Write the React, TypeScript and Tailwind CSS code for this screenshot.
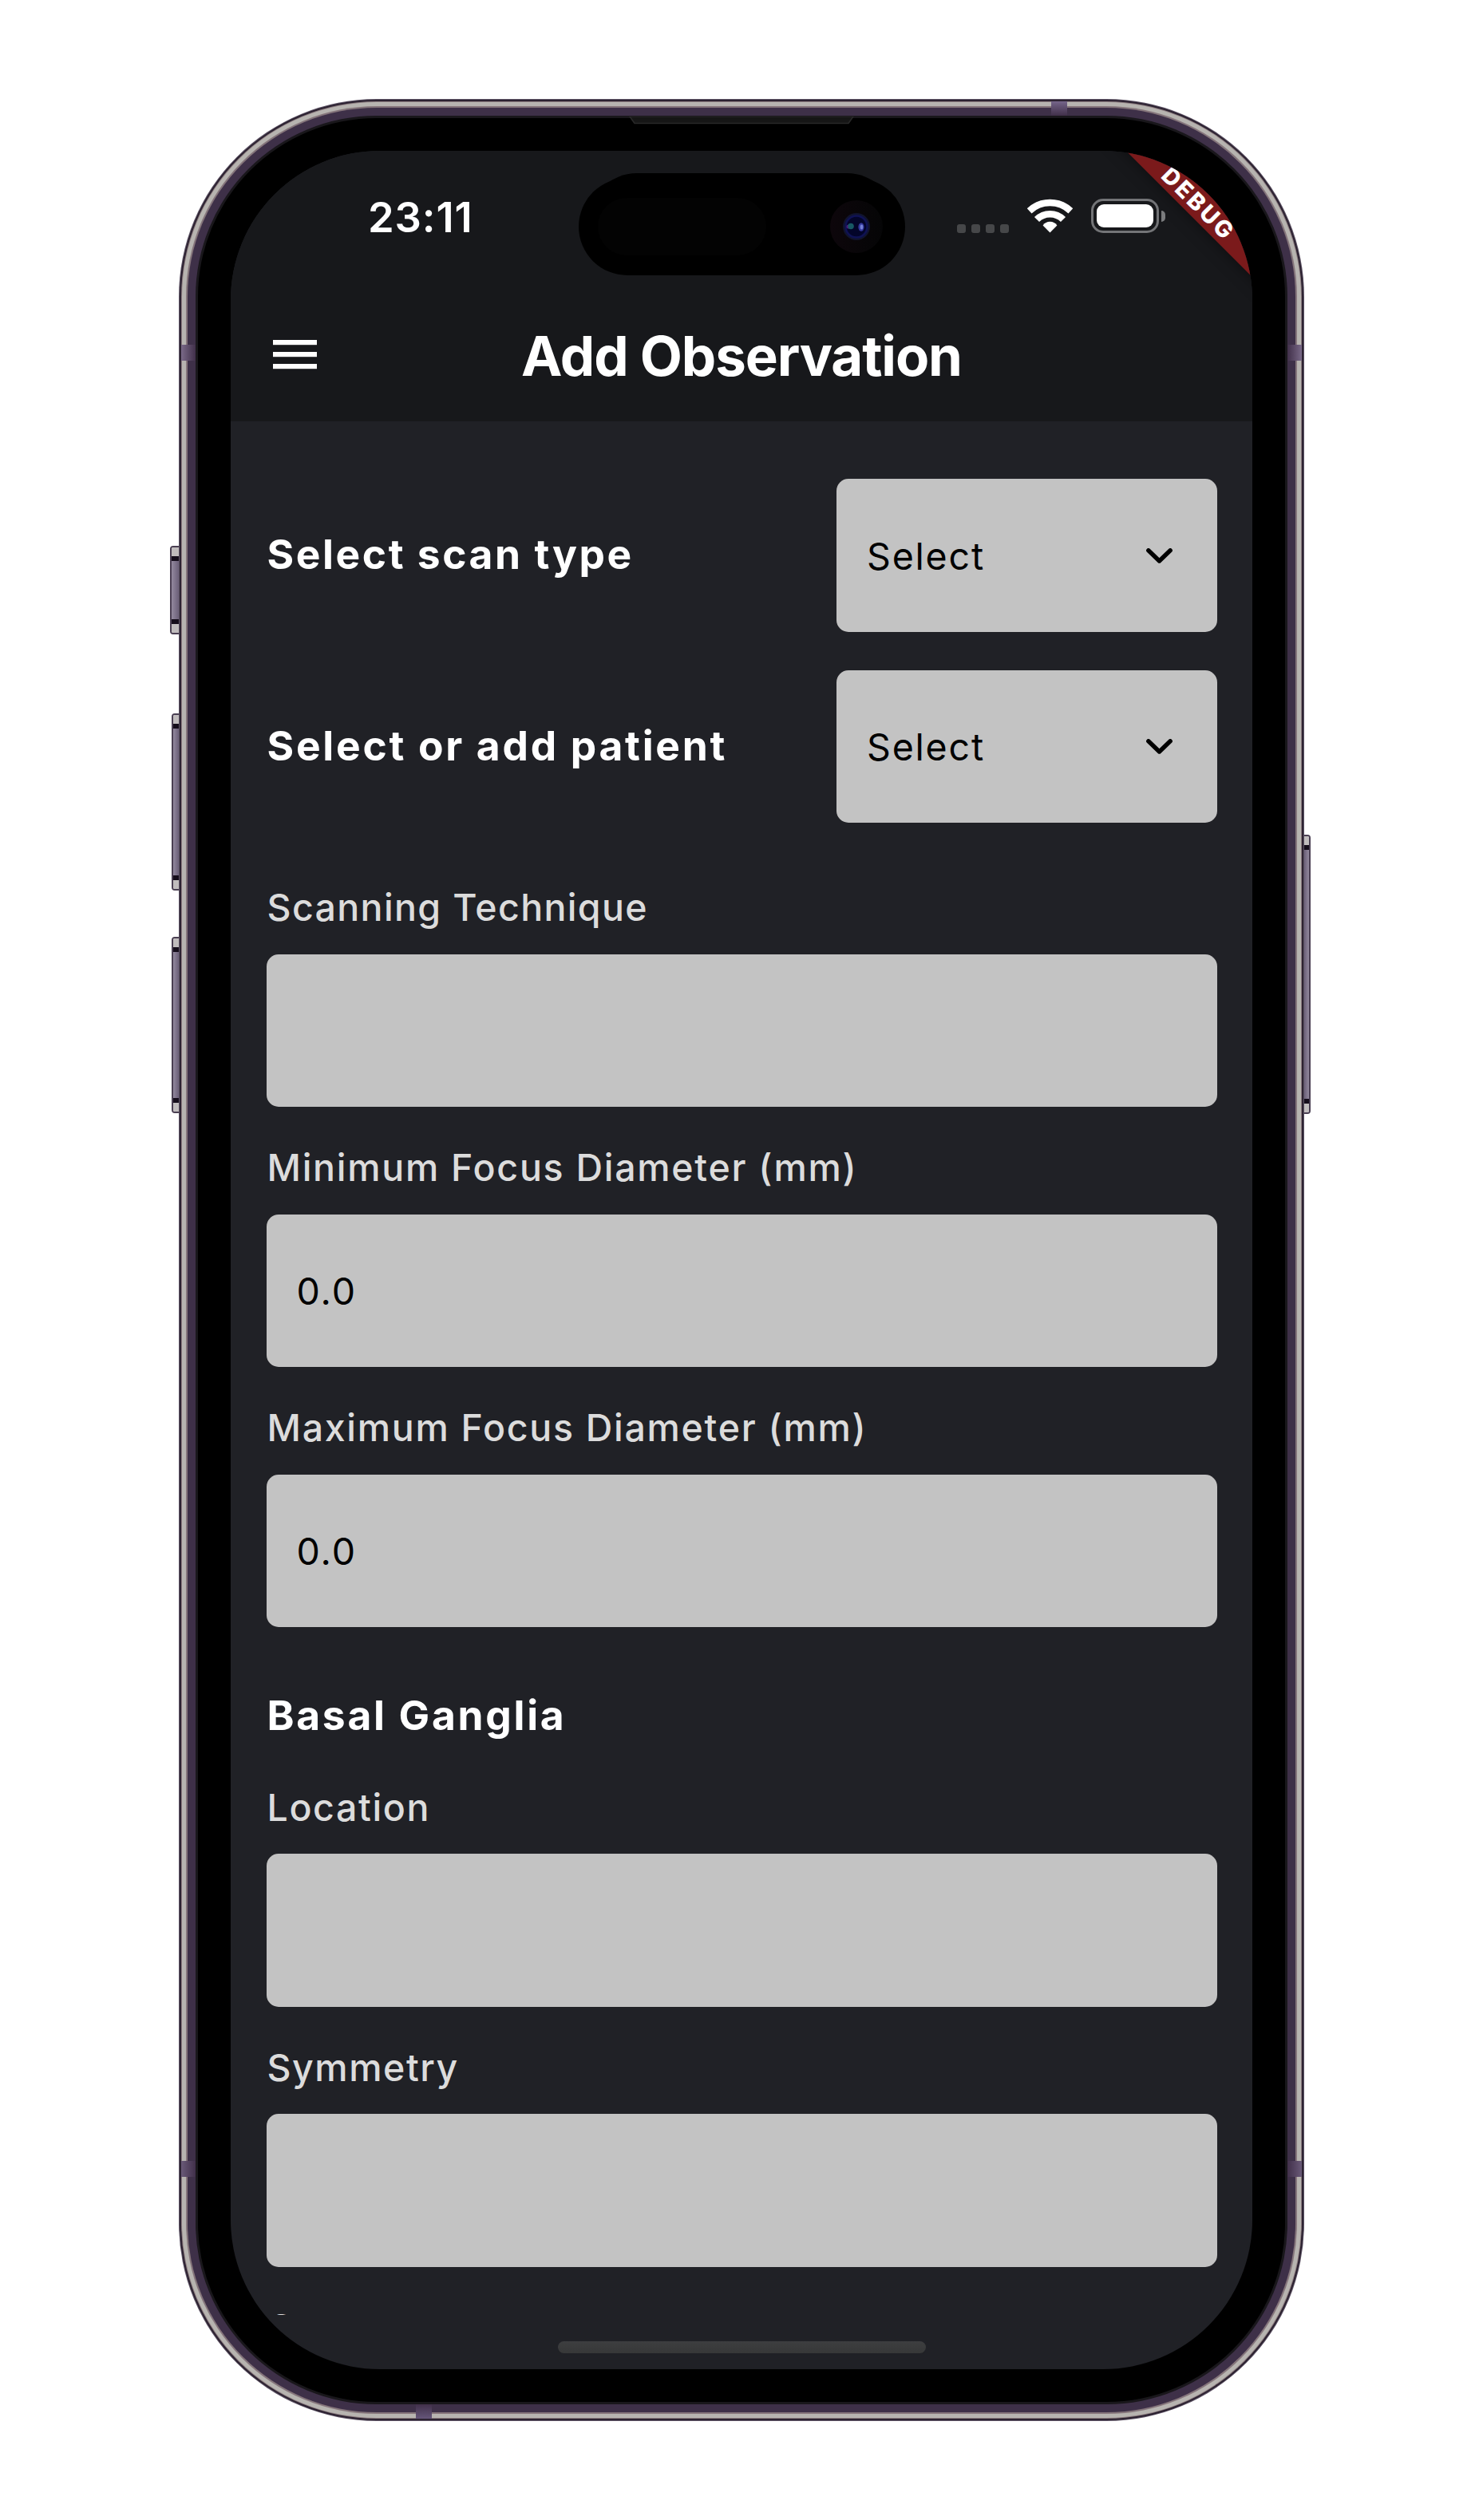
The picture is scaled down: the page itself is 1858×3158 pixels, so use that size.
import type { ReactNode } from "react";

function DeviceFrame({ children }: { children: ReactNode }) {
  return (
    <div className="relative h-[2910px] w-[1410px]">
      <SideButton className="left-[-11px] top-[560px] h-[111px] w-[13px]" />
      <SideButton className="left-[-9px] top-[770px] h-[222px] w-[11px]" />
      <SideButton className="left-[-9px] top-[1050px] h-[221px] w-[11px]" />
      <SideButton flip className="right-[-8px] top-[922px] h-[350px] w-[10px]" />

      <div className="relative h-full rounded-[248px] bg-[#5d5364] p-px">
        <div className="h-full rounded-[247px] bg-[#2c2231] p-[2px]">
          <div className="h-full rounded-[245px] bg-[#8b7b7f] p-px">
            <div className="h-full rounded-[244px] bg-[#b7b4b0] p-[5px]">
              <div className="h-full rounded-[239px] bg-[#85757b] p-[2px]">
                <div className="h-full rounded-[237px] bg-[#3e3048] p-[10px]">
                  <div className="h-full rounded-[227px] bg-[#19171b] p-[3px]">
                    <div className="h-full rounded-[224px] bg-black p-[41px]">
                      <div className="relative h-full overflow-hidden rounded-[187px] bg-[#202126]">
                        {children}
                      </div>
                    </div>
                  </div>
                </div>
              </div>
            </div>
          </div>
        </div>
      </div>

      {/* Antenna bands */}
      <div className="absolute left-[3px] top-[308px] h-[20px] w-[18px] bg-gradient-to-r from-[#7a6a88] to-[#41304a]" />
      <div className="absolute right-[3px] top-[308px] h-[20px] w-[18px] bg-gradient-to-l from-[#7a6a88] to-[#41304a]" />
      <div className="absolute left-[3px] top-[2584px] h-[20px] w-[18px] bg-gradient-to-r from-[#6a5a78] to-[#41304a]" />
      <div className="absolute right-[3px] top-[2584px] h-[20px] w-[18px] bg-gradient-to-l from-[#6a5a78] to-[#41304a]" />
      <div className="absolute left-[1093px] top-[3px] h-[18px] w-[20px] bg-gradient-to-b from-[#75658a] to-[#41304a]" />
      <div className="absolute bottom-[3px] left-[297px] h-[18px] w-[20px] bg-gradient-to-t from-[#65567a] to-[#41304a]" />

      {/* Earpiece */}
      <svg className="absolute left-[564px] top-[22px]" width="282" height="10" viewBox="0 0 282 10">
        <path d="M1 0 L7 8.5 H275 L281 0 Z" fill="#161616" stroke="#292929" strokeWidth="1.6" />
      </svg>
    </div>
  );
}

function SideButton({ className, flip = false }: { className: string; flip?: boolean }) {
  return (
    <div
      className={`absolute flex flex-col overflow-hidden border-2 border-[#4a3f52] ${
        flip ? "rounded-r-[4px]" : "rounded-l-[4px]"
      } ${className}`}
    >
      <div className="h-[11px] bg-[#c0bcbd]" />
      <div className="h-[6px] bg-[#150d1b]" />
      <div
        className={`flex-1 ${
          flip
            ? "bg-gradient-to-l from-[#93899e] to-[#6b5f78]"
            : "bg-gradient-to-r from-[#93899e] to-[#6b5f78]"
        }`}
      />
      <div className="h-[6px] bg-[#150d1b]" />
      <div className="h-[11px] bg-[#c0bcbd]" />
    </div>
  );
}

function DynamicIsland() {
  return (
    <div className="absolute left-[436px] top-[28px] h-[128px] w-[409px]">
      <div className="absolute left-[12px] top-0 h-[122px] w-[385px] rounded-full bg-black" />
      <div className="absolute left-0 top-[6px] flex h-[122px] w-[409px] items-center justify-between rounded-full bg-black pl-[24px] pr-[28px]">
        <div className="h-[72px] w-[211px] rounded-full bg-[#030303]" />
        <div className="flex size-[66px] items-center justify-center rounded-full bg-gradient-to-r from-[#0d060b] to-[#050506]">
          <svg width="36" height="36" viewBox="0 0 36 36">
            <circle cx="18" cy="18" r="17" fill="#11142e" />
            <circle cx="18" cy="18" r="13.5" fill="#03052a" stroke="#0f1254" strokeWidth="2.5" />
            <circle cx="8" cy="18" r="2.6" fill="#4c1878" />
            <circle cx="11" cy="17.5" r="3.8" fill="#175864" />
            <ellipse cx="24" cy="18.5" rx="3.6" ry="5.2" fill="#34389c" />
            <ellipse cx="24.5" cy="18.5" rx="1.8" ry="3" fill="#7480d8" />
          </svg>
        </div>
      </div>
    </div>
  );
}

function StatusBar() {
  return (
    <div className="flex h-[166px] items-center justify-between pl-[172px] pr-[109px]">
      <span className="text-[52.5px] font-semibold leading-none tracking-[0.86px]">23:11</span>
      <div className="mb-[3px] flex h-[43px] items-end gap-[23px]">
        <div className="flex gap-[7px]">
          {[0, 1, 2, 3].map((dot) => (
            <span key={dot} className="size-[11px] rounded-[3px] bg-[#464749]" />
          ))}
        </div>
        <svg width="57" height="43" viewBox="0 0 57 43" fill="none">
          <path d="M2.6 15.3 A37.75 37.75 0 0 1 54.4 15.3" stroke="#fff" strokeWidth="8.5" />
          <path d="M12 26 A23.4 23.4 0 0 1 45 26" stroke="#fff" strokeWidth="8.6" />
          <path d="M28.5 42.4 L19.6 33.4 Q23 28.8 28.5 28.8 Q34 28.8 37.4 33.4 Z" fill="#fff" />
        </svg>
        <div className="flex items-center gap-[3px]">
          <div className="h-[43px] w-[85px] rounded-[15px] border-[3px] border-[#737477] p-[4px]">
            <div className="h-full rounded-[9px] bg-white" />
          </div>
          <div className="h-[14px] w-[5px] rounded-r-full bg-[#7b7c7e]" />
        </div>
      </div>
    </div>
  );
}

function AppBar() {
  return (
    <div className="flex h-[173px] items-center justify-between px-[53px] pt-[6px]">
      <svg width="55" height="37" viewBox="0 0 55 37" fill="#fff">
        <rect width="55" height="6.2" />
        <rect y="15" width="55" height="6.2" />
        <rect y="30" width="55" height="6.2" />
      </svg>
      <h1 className="pt-[3px] text-[69px] font-bold leading-none tracking-[-1.13px]">Add Observation</h1>
      <div className="w-[55px]" />
    </div>
  );
}

function DebugBanner() {
  return (
    <div className="absolute left-[962px] top-[48px] flex h-[35px] w-[500px] rotate-45 items-center justify-center bg-[#7b1a1b] pl-[2px] text-[29px] font-extrabold leading-none tracking-[3px] shadow-[0_0_20px_rgba(0,0,0,0.45)]">
      DEBUG
    </div>
  );
}

function SelectRow({ label, tracking }: { label: string; tracking: string }) {
  return (
    <div className="flex h-[191.5px] items-center justify-between">
      <span className={`pb-[2px] pl-px text-[51.5px] font-bold leading-none ${tracking}`}>{label}</span>
      <button className="flex h-full w-[477px] items-center justify-between rounded-[15px] bg-[#c3c3c3] pl-[38px] pr-[56px] text-black">
        <span className="pt-[2px] text-[46.5px] leading-none tracking-[1.8px]">Select</span>
        <svg className="mt-[2px]" width="33" height="20" viewBox="0 0 33 20" fill="none">
          <path
            d="M2.8 2.8 L16.5 16 L30.2 2.8"
            stroke="#000"
            strokeWidth="5.4"
            strokeLinecap="round"
            strokeLinejoin="round"
          />
        </svg>
      </button>
    </div>
  );
}

function Field({ label, value = "", tracking }: { label: string; value?: string; tracking: string }) {
  return (
    <label className="flex flex-col">
      <span className={`mb-[28.5px] pl-px text-[46.5px] font-medium leading-[60px] text-[#dcdcdc] ${tracking}`}>
        {label}
      </span>
      <span className="flex h-[191.5px] items-center rounded-[15px] bg-[#c3c3c3] pl-[38px] pt-[2px] text-[46.5px] leading-none tracking-[1.9px] text-black">
        {value}
      </span>
    </label>
  );
}

export default function App() {
  return (
    <main className="flex h-[3158px] w-full justify-center bg-white pt-[124px] font-['Inter',sans-serif] text-white">
      <DeviceFrame>
        <header className="h-[339px] bg-[#17181b]">
          <StatusBar />
          <AppBar />
        </header>

        <div className="flex h-[2373px] flex-col overflow-hidden pl-[44.5px] pr-[44px] pt-[72px]">
          <div className="flex shrink-0 flex-col gap-[48px]">
            <SelectRow label="Select scan type" tracking="tracking-[2.56px]" />
            <SelectRow label="Select or add patient" tracking="tracking-[2.72px]" />
          </div>

          <div className="mt-[76px] flex shrink-0 flex-col gap-[46px]">
            <Field label="Scanning Technique" tracking="tracking-[1.35px]" />
            <Field label="Minimum Focus Diameter (mm)" value="0.0" tracking="tracking-[1.72px]" />
            <Field label="Maximum Focus Diameter (mm)" value="0.0" tracking="tracking-[1.7px]" />
          </div>

          <h2 className="mb-[55.5px] mt-[80px] shrink-0 pl-px text-[51.5px] font-bold leading-[60px] tracking-[2.7px]">
            Basal Ganglia
          </h2>

          <div className="flex shrink-0 flex-col gap-[46px]">
            <Field label="Location" tracking="tracking-[1.61px]" />
            <Field label="Symmetry" tracking="tracking-[1.54px]" />
            <Field label="Comments" tracking="tracking-[1.5px]" />
          </div>
        </div>

        <div className="mx-auto mt-[33px] h-[15px] w-[461px] rounded-full bg-gradient-to-b from-[#3d3e40] to-[#373838]" />

        <DynamicIsland />
        <DebugBanner />
      </DeviceFrame>
    </main>
  );
}
